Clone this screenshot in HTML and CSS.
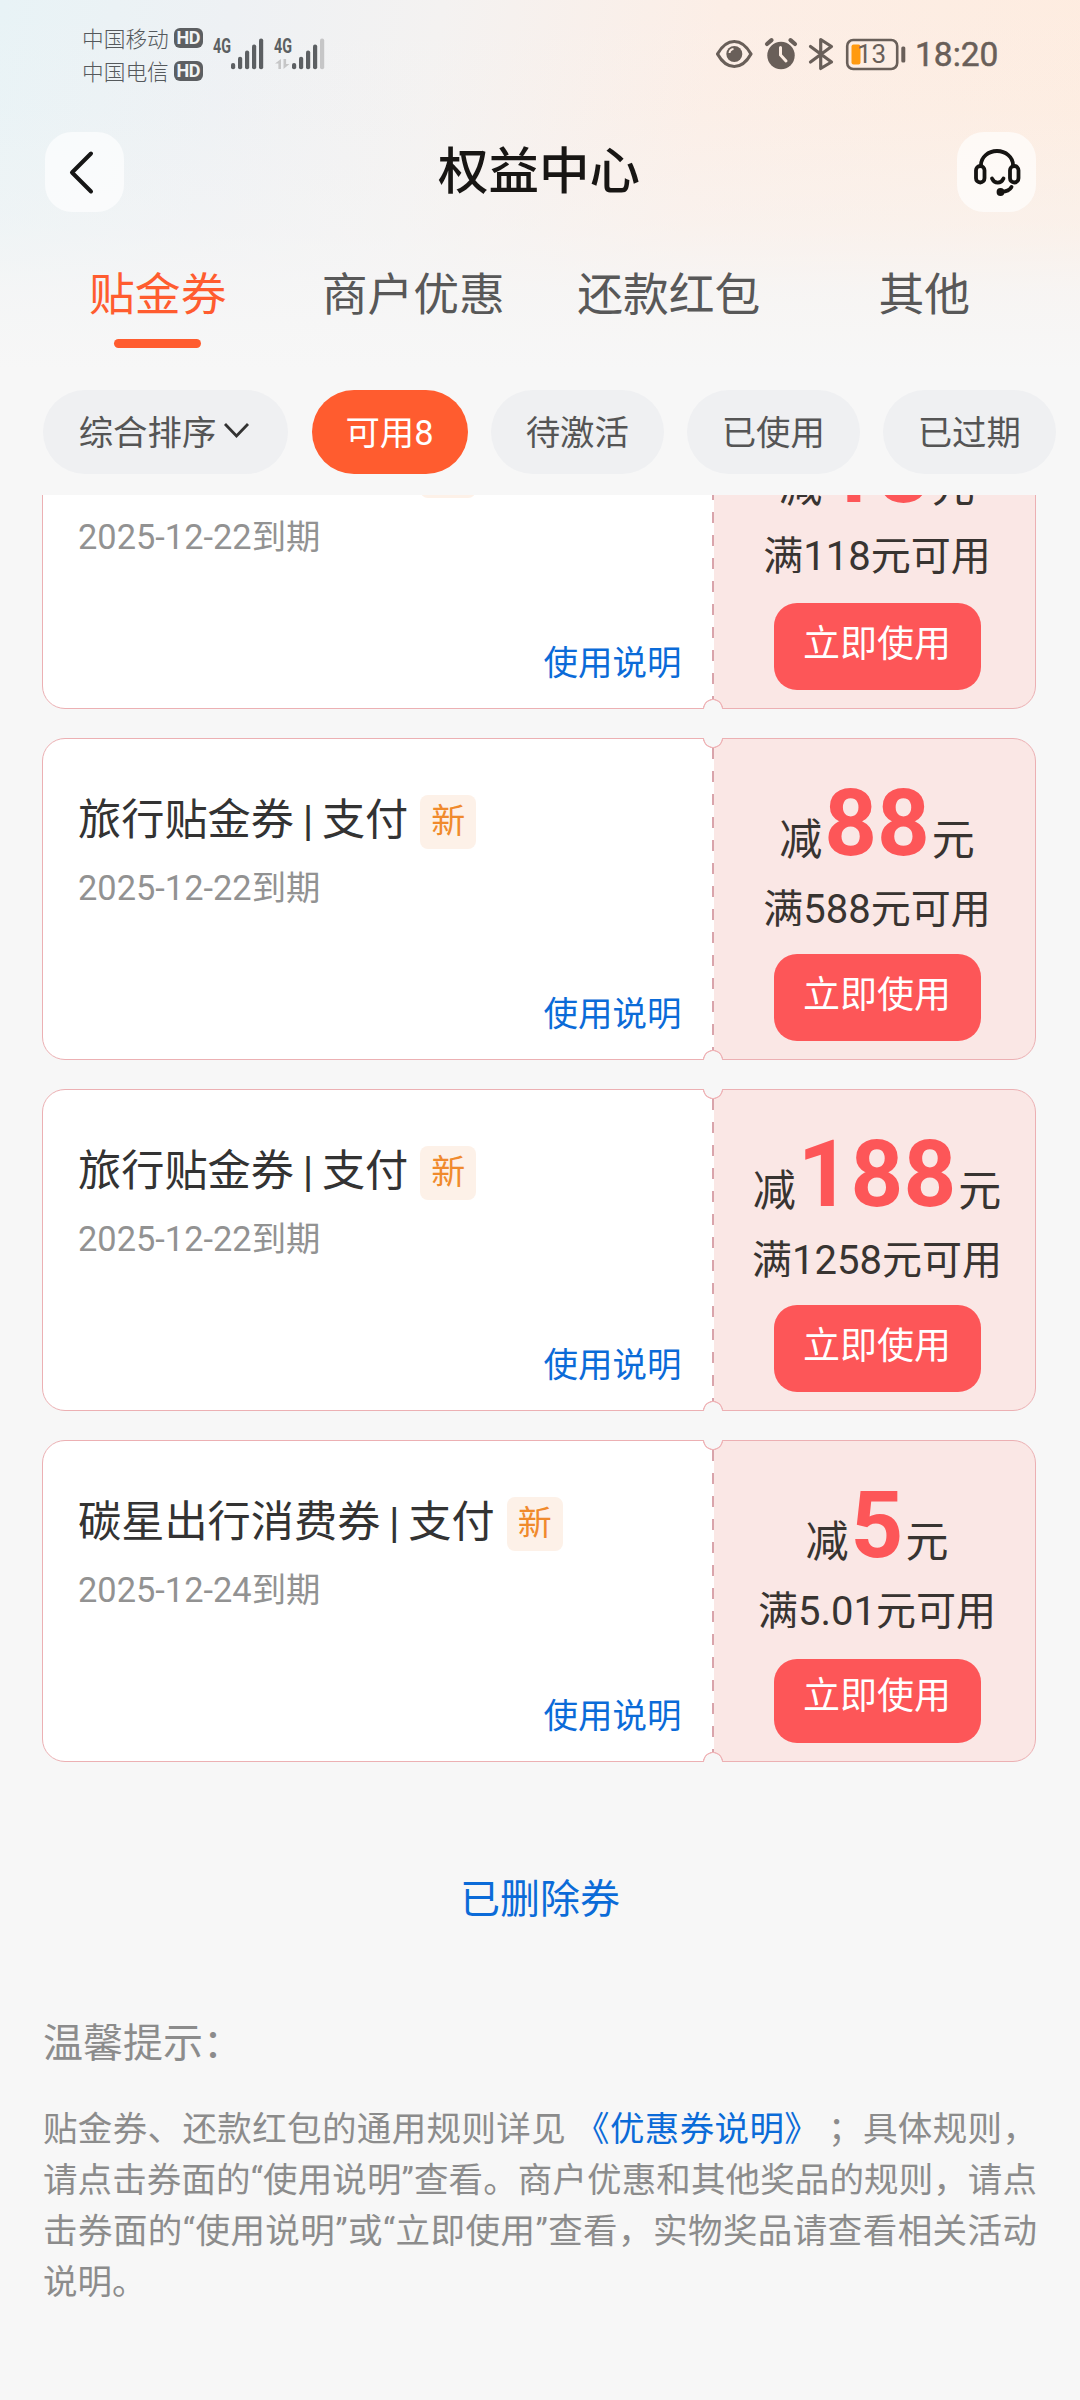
FILE: index.html
```html
<!DOCTYPE html>
<html lang="zh-CN">
<head>
<meta charset="utf-8">
<title>权益中心</title>
<link rel="stylesheet" href="styles.css">
</head>
<body>
<div class="top">
  <div class="status">
    <div class="carriers">
      <div class="carrier">中国移动<span class="hd">HD</span></div>
      <div class="carrier">中国电信<span class="hd">HD</span></div>
    </div>
    <svg class="signal" width="120" height="40" viewBox="210 34 120 40">
      <g fill="#5c5f62">
        <text x="213" y="53" class="net" textLength="18" lengthAdjust="spacingAndGlyphs">4G</text>
        <text x="274" y="53" class="net" textLength="18" lengthAdjust="spacingAndGlyphs">4G</text>
        <rect x="231" y="63" width="4.2" height="6.3" rx="2"/><rect x="238" y="56.7" width="4.2" height="12.6" rx="2"/><rect x="245" y="50.6" width="4.2" height="18.7" rx="2"/><rect x="252" y="44.4" width="4.2" height="24.9" rx="2"/><rect x="259" y="38.5" width="4.2" height="30.8" rx="2"/>
        <rect x="292" y="63" width="4.2" height="6.3" rx="2"/><rect x="299" y="56.7" width="4.2" height="12.6" rx="2"/><rect x="306" y="50.6" width="4.2" height="18.7" rx="2"/><rect x="313" y="44.4" width="4.2" height="24.9" rx="2"/>
      </g>
      <g fill="#c6c6c7"><rect x="320" y="38.5" width="4.2" height="30.8" rx="2"/><path d="M281 59v10h-2.600v-5.500H275zM283.500 59v10l6-5h-3.400v-5z"/></g>
    </svg>
    <div class="status-right">
      <svg width="190" height="40" viewBox="714 34 190 40" fill="none" stroke="#695f59">
        <path d="M717.500 54C722 46 728 41.500 734.300 41.500S746.500 46 751 54C746.500 62 740.600 66.500 734.300 66.500S722 62 717.500 54z" stroke-width="3.200" stroke-linejoin="round"/>
        <circle cx="734.300" cy="54" r="8" fill="#695f59" stroke="none"/><path d="M729.500 53a4.500 4.500 0 0 1 4-4" stroke="#fdede3" stroke-width="2"/>
        <circle cx="781" cy="55.500" r="13.700" fill="#695f59" stroke="none"/><path d="M767 44l4.500-3.800M795 44l-4.500-3.800" stroke-width="4.200" stroke-linecap="round"/><path d="M780.500 47.500v7.500l5.500 6" stroke="#fdede3" stroke-width="3" stroke-linecap="round"/>
        <path d="M810.500 46.500l21 15.500-10.800 6.500v-29l10.800 7-21 15.500" stroke-width="3.200" stroke-linejoin="round" stroke-linecap="round"/>
        <rect x="847.200" y="40" width="50" height="29" rx="6" stroke-width="2.600"/>
        <rect x="851.500" y="44.500" width="9" height="20" rx="2" fill="#ff9a10" stroke="none"/>
        <rect x="901.300" y="46.500" width="4" height="16" rx="1.500" fill="#695f59" stroke="none"/>
        <text x="857" y="62.800" class="level">13</text>
      </svg>
      <span class="clock">18:20</span>
    </div>
  </div>
  <header class="nav">
    <button class="nav-btn"><svg width="79" height="80" viewBox="0 0 79 80" fill="none" stroke="#161616" stroke-width="4" stroke-linecap="round" stroke-linejoin="round"><path d="M46 21.500L27 40.500l19 19"/></svg></button>
    <h1>权益中心</h1>
    <button class="nav-btn warm"><svg width="79" height="80" viewBox="0 0 79 80" fill="none" stroke="#161412" stroke-width="3.800" stroke-linecap="round"><path d="M24 34v-1a16 14 0 0 1 32 0v1"/><rect x="19" y="34" width="8.500" height="16.500" rx="4.200"/><rect x="53" y="34" width="8.500" height="16.500" rx="4.200"/><path d="M35 46.500c2.500 5.500 9 5.500 11.500 0M54.500 55c-2 3.500-5.500 4.700-10 4.800"/><circle cx="43.500" cy="60" r="2" fill="#161412"/></svg></button>
  </header>
  <nav class="tabs">
    <a class="tab active">贴金券</a><a class="tab">商户优惠</a><a class="tab">还款红包</a><a class="tab">其他</a>
  </nav>
  <div class="chips">
    <span class="chip sort">综合排序<svg width="28" height="20" viewBox="0 0 28 20" fill="none" stroke="#333" stroke-width="2.800"><path d="M3 3l11.500 12L26 3"/></svg></span>
    <span class="chip active avail">可用8</span>
    <span class="chip">待激活</span><span class="chip">已使用</span><span class="chip">已过期</span>
  </div>
</div>
<main class="scroll">
  <section class="list">
    <article class="card first">
      <div class="info"><div class="name">旅行贴金券 | 支付<span class="tag">新</span></div><div class="date">2025-12-22到期</div><a class="rule">使用说明</a></div>
      <div class="value"><div class="amount">减<b>18</b>元</div><div class="cond">满118元可用</div><button class="use">立即使用</button></div>
    </article>
    <article class="card">
      <div class="info"><div class="name">旅行贴金券 | 支付<span class="tag">新</span></div><div class="date">2025-12-22到期</div><a class="rule">使用说明</a></div>
      <div class="value"><div class="amount">减<b>88</b>元</div><div class="cond">满588元可用</div><button class="use">立即使用</button></div>
    </article>
    <article class="card">
      <div class="info"><div class="name">旅行贴金券 | 支付<span class="tag">新</span></div><div class="date">2025-12-22到期</div><a class="rule">使用说明</a></div>
      <div class="value"><div class="amount">减<b>188</b>元</div><div class="cond">满1258元可用</div><button class="use">立即使用</button></div>
    </article>
    <article class="card last">
      <div class="info"><div class="name">碳星出行消费券 | 支付<span class="tag">新</span></div><div class="date">2025-12-24到期</div><a class="rule">使用说明</a></div>
      <div class="value"><div class="amount">减<b>5</b>元</div><div class="cond">满5.01元可用</div><button class="use">立即使用</button></div>
    </article>
  </section>
  <a class="deleted">已删除券</a>
  <section class="tips">
    <h2>温馨提示：</h2>
    <p>贴金券、还款红包的通用规则详见 <a>《优惠券说明》</a> ；具体规则，请点击券面的“使用说明”查看。商户优惠和其他奖品的规则，请点击券面的“使用说明”或“立即使用”查看，实物奖品请查看相关活动说明。</p>
  </section>
</main>
</body>
</html>
```
FILE: styles.css
```css
* { box-sizing: border-box; }
body {
  margin: 0;
  width: 1080px;
  height: 2400px;
  overflow: hidden;
  background: #f7f7f7;
  font-family: Roboto, "Noto Sans CJK SC", sans-serif;
  font-weight: 400;
  color: #333;
}
button { border: 0; padding: 0; font: inherit; }
h1, h2, p { margin: 0; }

.top {
  height: 495px;
  background:
    linear-gradient(180deg, rgba(246,246,246,0) 0, rgba(246,246,246,.1) 110px, rgba(246,246,246,.45) 225px, rgba(246,246,246,.85) 290px, #f7f7f7 370px),
    linear-gradient(100deg, #e8f3f6 0, #eef1f4 20%, #f4f2f1 38%, #fceee6 62%, #feecdf 100%);
}
.status { display: flex; height: 110px; padding: 21px 81px 0 82px; }
.carriers { width: 128px; }
.carrier { display: flex; align-items: center; height: 33px; font-size: 21.700px; font-weight: 300; color: #55595c; white-space: nowrap; }
.hd { margin: 1px 0 0 5px; width: 29px; height: 20px; border-radius: 6px; background: #5c5f62; color: #f1f4f5; font-size: 18px; font-weight: 700; line-height: 20px; text-align: center; letter-spacing: -.5px; }
.signal { margin-top: 13px; }
.net { font: 700 20px Roboto; }
.level { font: 400 26px Roboto; fill: #695f59; stroke: none; }
.status-right { display: flex; margin: 13px 0 0 auto; width: 285px; }
.status-right svg { overflow: visible; flex: none; }
.clock { margin-left: 11px; font-size: 33.500px; font-weight: 400; line-height: 42px; color: #695f59; -webkit-text-stroke: .5px #695f59; }

.nav { display: flex; align-items: center; justify-content: space-between; height: 124px; padding: 0 44px 0 45px; }
.nav-btn { width: 79px; height: 80px; border-radius: 27px; background: rgba(255,255,255,.65); }
.nav-btn svg { display: block; }
h1 { font-size: 50.500px; font-weight: 500; line-height: 70px; margin-left: -3px; color: #181614; }

.tabs { display: grid; grid-template-columns: repeat(4, 1fr); height: 116px; padding: 22px 28px 0 30px; }
.tab { display: flex; flex-direction: column; align-items: center; font-size: 45.800px; line-height: 80px; color: #585858; }
.tab.active { color: #ff5c2f; }
.tab.active::after { content: ""; width: 87px; height: 9px; margin-top: 3px; border-radius: 5px; background: #ff5c2f; }

.chips { display: flex; gap: 23.500px; padding: 40px 0 0 43px; }
.chip { width: 172.500px; height: 84px; border-radius: 42px; background: #eff0f2; display: flex; align-items: center; justify-content: center; font-size: 34.400px; color: #555; padding-bottom: 5px; flex: none; }
.sort { width: 245px; gap: 6px; }
.sort svg { margin: 2px 2px 0 0; }
.avail { width: 156px; }
.chip.active { background: #ff5c2f; color: #fff; }

.scroll { height: 1905px; overflow: hidden; }
.list { display: flex; flex-direction: column; gap: 29.500px; margin-top: -108px; padding: 0 44px 0 42px; }
.card { position: relative; display: flex; height: 321.500px; border: 1.500px solid #ecb0b3; border-radius: 23px; background: linear-gradient(90deg, #fff 671px, #fae7e5 671px); }
/* perforated divider between the two halves */
.card::before {
  content: ""; position: absolute; left: 669px; top: 9px; bottom: 7px; width: 2px;
  background: repeating-linear-gradient(180deg, #d9a4ab 0 11px, transparent 11px 23px);
}
/* half-circle notches on the top and bottom edges */
.card::after {
  content: ""; position: absolute; left: 660px; top: -1px; width: 20px; bottom: -1px;
  background:
    radial-gradient(circle at 10px 0, #f7f7f7 8.500px, #efb5b8 9px 9.800px, transparent 10.300px) top / 20px 11px no-repeat,
    radial-gradient(circle at 10px 11px, #f7f7f7 8.500px, #efb5b8 9px 9.800px, transparent 10.300px) bottom / 20px 11px no-repeat;
}
.info { width: 671px; padding: 48px 32.500px 0 35px; display: flex; flex-direction: column; }
.name { display: flex; align-items: center; height: 64px; padding-bottom: 6px; font-size: 43.200px; white-space: pre; word-spacing: -2px; }
.tag { width: 56px; height: 54px; margin: 11px 0 0 12px; border-radius: 8px; background: #fdf1e8; color: #f08a2c; font-size: 34px; line-height: 53px; text-align: center; }
.date { margin-top: 12px; font-size: 34.400px; line-height: 50px; color: #929292; }
.rule { margin: 76px 0 0 auto; font-size: 34.500px; line-height: 50px; color: #0b6bd8; }
.value { flex: 1; display: flex; flex-direction: column; align-items: center; padding: 29px 0 0 5px; color: #383431; }
.amount { height: 112px; font-size: 43px; line-height: 112px; white-space: nowrap; }
.amount b { margin: 0 2px; font-size: 92px; font-weight: 700; color: #fd5658; }
.cond { height: 60px; font-size: 40px; line-height: 60px; white-space: nowrap; }
.use { width: 207px; height: 87px; margin-top: 14px; border-radius: 23px; background: #fd5658; color: #fff; font-size: 37px; line-height: 83px; padding-bottom: 4px; }
.first .amount { margin-top: -2px; }
.first .use { margin-top: 16px; }
.last .use { height: 84px; margin-top: 17px; line-height: 76px; padding-bottom: 8px; }

.deleted { display: block; margin-top: 108px; font-size: 40px; line-height: 60px; text-align: center; color: #0b6bd8; }
.tips { padding: 84px 43px 0 43px; color: #8c8c8c; }
.tips h2 { font-size: 40px; font-weight: 400; line-height: 60px; }
.tips p { margin-top: 30px; font-size: 34.500px; line-height: 51px; text-align: justify; }
.tips a { color: #0b6bd8; }
```
